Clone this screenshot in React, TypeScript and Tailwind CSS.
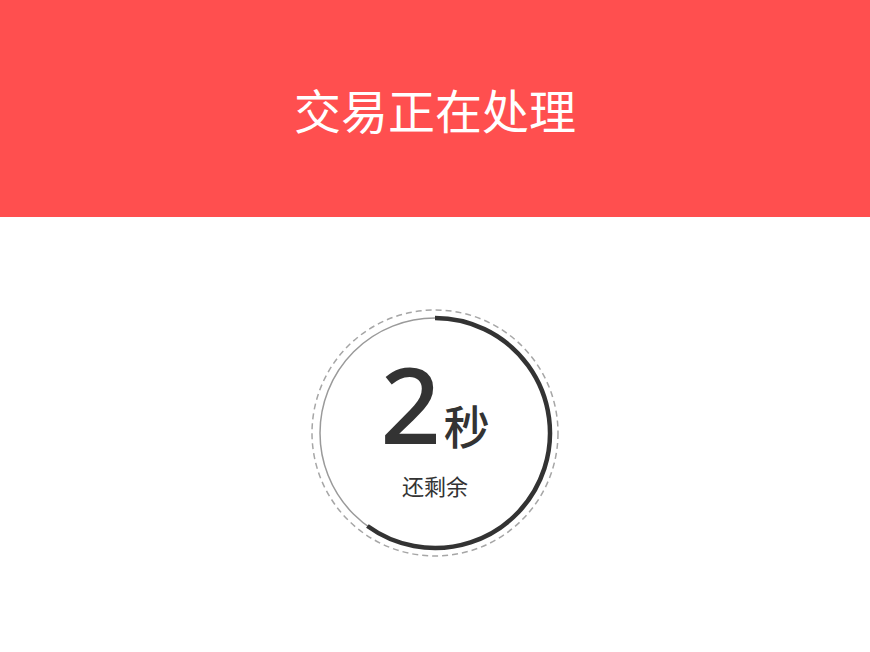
import React from "react";

const cx = 125;
const cy = 125;
const rInner = 115;
const frac = 0.6;
const angle = frac * 2 * Math.PI;
const ex = cx + rInner * Math.sin(angle);
const ey = cy - rInner * Math.cos(angle);
const largeArc = frac > 0.5 ? 1 : 0;

export default function App() {
  return (
    <div
      className="w-[870px] h-[652px] bg-white"
      style={{ fontFamily: '"Noto Sans CJK SC", "Noto Sans", sans-serif' }}
    >
      <div className="h-[217px] bg-[#ff4f4f] flex items-center justify-center">
        <h1 className="text-white text-[47px] leading-none font-normal">
          交易正在处理
        </h1>
      </div>
      <div className="flex justify-center pt-[91px]">
        <div className="relative w-[250px] h-[250px] flex flex-col items-center">
          <svg
            className="absolute inset-0"
            width="250"
            height="250"
            viewBox="0 0 250 250"
          >
            <circle
              cx={cx}
              cy={cy}
              r={123}
              fill="none"
              stroke="#a6a6a6"
              strokeWidth="1.5"
              strokeDasharray="6 4"
            />
            <circle
              cx={cx}
              cy={cy}
              r={rInner}
              fill="none"
              stroke="#9a9a9a"
              strokeWidth="1.5"
            />
            <path
              d={`M ${cx} ${cy - rInner} A ${rInner} ${rInner} 0 ${largeArc} 1 ${ex} ${ey}`}
              fill="none"
              stroke="#333333"
              strokeWidth="4.5"
            />
          </svg>
          <div className="relative flex items-baseline mt-[42px] text-[#333]">
            <span
              className="text-[106px] leading-none font-medium"
              style={{ fontFamily: '"Noto Sans", sans-serif' }}
            >
              2
            </span>
            <span className="text-[46px] leading-none ml-[3px] font-medium">秒</span>
          </div>
          <div className="relative text-[22px] leading-none text-[#333] mt-[18px]">
            还剩余
          </div>
        </div>
      </div>
    </div>
  );
}
